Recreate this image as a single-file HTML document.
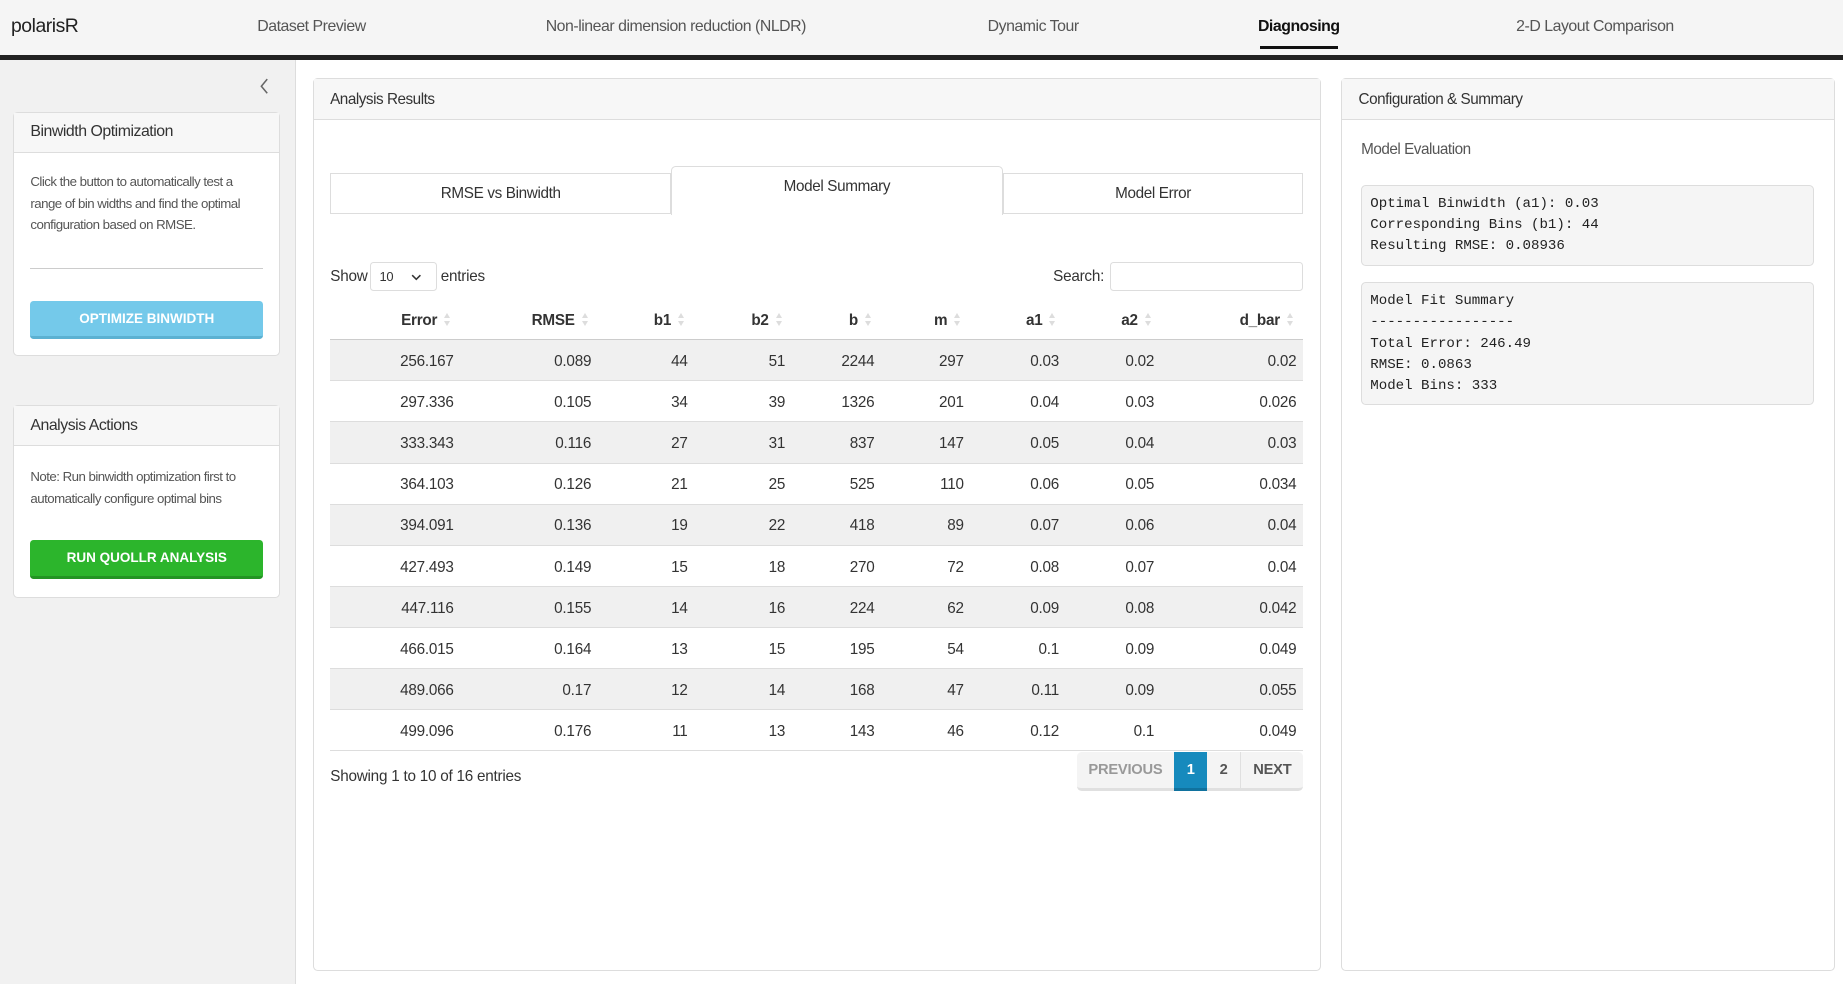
<!DOCTYPE html>
<html><head><meta charset="utf-8"><style>
*{box-sizing:border-box;margin:0;padding:0}
html,body{width:1843px;height:984px;overflow:hidden;background:#fff}
#root{zoom:1.17538;width:1568px;height:837px;position:relative;font-family:"Liberation Sans",sans-serif;color:#333;letter-spacing:-0.2px}
.abs{position:absolute}
.nav{left:0;top:0;width:1568px;height:47px;background:#f5f5f5}
.navbar-line{left:0;top:47px;width:1568px;height:4px;background:#222}
.nav span{position:absolute;top:15px;font-size:13.5px;color:#555;transform:translateX(-50%);white-space:nowrap;letter-spacing:-0.4px}
.side{left:0;top:51px;width:252px;height:786px;background:#f1f1f1;border-right:1px solid #ddd}
.card{position:absolute;background:#fff;border:1px solid #ddd;border-radius:4px}
.card .hd{height:34px;background:#f7f7f7;border-bottom:1px solid #ddd;padding:9px 14px;font-size:13.5px;color:#333;letter-spacing:-0.4px}
.txt{font-size:11.3px;color:#555;line-height:18px;letter-spacing:-0.45px}
.btn{position:absolute;left:14px;width:198px;height:33px;border-radius:3px;color:#fff;font-weight:bold;font-size:11.5px;text-align:center;line-height:31px;letter-spacing:0}
.panel{position:absolute;background:#fff;border:1px solid #ddd;border-radius:4px}
.panel .hd{height:35px;background:#f7f7f7;border-bottom:1px solid #ddd;padding:11px 14px;font-size:13px;color:#333;letter-spacing:-0.4px}
.tab{position:absolute;border:1px solid #ddd;background:#fff;font-size:13px;text-align:center;color:#333;letter-spacing:-0.3px}
table{position:absolute;left:281px;top:255px;width:828px;border-collapse:collapse;font-size:13px}
th{height:34px;text-align:right;font-weight:bold;padding-right:20px;padding-top:2px;position:relative;border-bottom:1px solid #ccc}
th::after{content:"";position:absolute;right:9px;top:11px;width:0;height:0;border-left:3px solid transparent;border-right:3px solid transparent;border-bottom:5px solid #ddd}
th::before{content:"";position:absolute;right:9px;top:18px;width:0;height:0;border-left:3px solid transparent;border-right:3px solid transparent;border-top:5px solid #ddd}
td{height:35px;text-align:right;padding-right:6px;padding-top:2px;border-top:1px solid #ddd;color:#333}
tr.o td{background:#f0f0f0}
tbody tr:last-child td{border-bottom:1px solid #ddd}
pre{position:absolute;left:1158px;width:385px;background:#f5f5f5;border:1px solid #ddd;border-radius:4px;font-family:"Liberation Mono",monospace;font-size:12px;line-height:18px;padding:7px 7px;color:#222;letter-spacing:0}
.pg{position:absolute;top:640px;height:33px;font-size:12.5px;font-weight:bold;text-align:center;line-height:31px;background:#f4f4f4;border-bottom:3px solid #e0e0e0}
</style></head><body><div id="root">
<div class="abs nav">
<span style="left:38px;font-size:16.5px;color:#222;top:13px">polarisR</span>
<span style="left:265px">Dataset Preview</span>
<span style="left:575px">Non-linear dimension reduction (NLDR)</span>
<span style="left:879px">Dynamic Tour</span>
<span style="left:1105px;color:#111;font-weight:bold">Diagnosing</span>
<span style="left:1357px">2-D Layout Comparison</span>
<div class="abs" style="left:1072px;top:39px;width:66px;height:3px;background:#111"></div>
</div>
<div class="abs navbar-line"></div>
<div class="abs side">
<svg class="abs" style="left:220px;top:15px" width="10" height="14"><path d="M7 1 L2 7 L7 13" stroke="#666" stroke-width="1.3" fill="none"/></svg>
<div class="card" style="left:11px;top:44px;width:227px;height:208px">
<div class="hd">Binwidth Optimization</div>
<div class="txt" style="padding:16px 14px 0">Click the button to automatically test a range of bin widths and find the optimal configuration based on RMSE.</div>
<div class="abs" style="left:14px;top:132px;width:198px;height:1px;background:#ccc"></div>
<div class="btn" style="top:160px;background:#74c9ea;border-bottom:3px solid #5bb1d2">OPTIMIZE BINWIDTH</div>
</div>
<div class="card" style="left:11px;top:294px;width:227px;height:164px">
<div class="hd">Analysis Actions</div>
<div class="txt" style="padding:17px 14px 0">Note: Run binwidth optimization first to automatically configure optimal bins</div>
<div class="btn" style="top:114px;background:#2cb52c;border-bottom:3px solid #239423">RUN QUOLLR ANALYSIS</div>
</div>
</div>
<div class="panel" style="left:266px;top:66px;width:858px;height:760px"><div class="hd">Analysis Results</div></div>
<div class="tab" style="left:281px;top:147px;width:290px;height:35px;line-height:34px">RMSE vs Binwidth</div>
<div class="tab" style="left:571px;top:141px;width:282px;height:42px;line-height:34px;border-bottom:none;border-radius:4px 4px 0 0">Model Summary</div>
<div class="tab" style="left:853px;top:147px;width:256px;height:35px;line-height:34px">Model Error</div>
<div class="abs" style="left:281px;top:228px;font-size:13px">Show</div>
<div class="abs" style="left:315px;top:223px;width:57px;height:25px;border:1px solid #ddd;border-radius:3px;font-size:11px;padding:5px 7px">10<svg class="abs" style="left:34px;top:9px" width="9" height="6"><path d="M1 1 L4.5 4.5 L8 1" stroke="#333" stroke-width="1.3" fill="none"/></svg></div>
<div class="abs" style="left:375px;top:228px;font-size:13px">entries</div>
<div class="abs" style="left:896px;top:228px;font-size:13px">Search:</div>
<div class="abs" style="left:944px;top:223px;width:165px;height:25px;border:1px solid #ddd;border-radius:3px"></div>
<table>
<thead><tr><th style="width:111px">Error</th><th style="width:117px">RMSE</th><th style="width:82px">b1</th><th style="width:83px">b2</th><th style="width:76px">b</th><th style="width:76px">m</th><th style="width:81px">a1</th><th style="width:81px">a2</th><th>d_bar</th></tr></thead>
<tbody>
<tr class="o"><td>256.167</td><td>0.089</td><td>44</td><td>51</td><td>2244</td><td>297</td><td>0.03</td><td>0.02</td><td>0.02</td></tr>
<tr><td>297.336</td><td>0.105</td><td>34</td><td>39</td><td>1326</td><td>201</td><td>0.04</td><td>0.03</td><td>0.026</td></tr>
<tr class="o"><td>333.343</td><td>0.116</td><td>27</td><td>31</td><td>837</td><td>147</td><td>0.05</td><td>0.04</td><td>0.03</td></tr>
<tr><td>364.103</td><td>0.126</td><td>21</td><td>25</td><td>525</td><td>110</td><td>0.06</td><td>0.05</td><td>0.034</td></tr>
<tr class="o"><td>394.091</td><td>0.136</td><td>19</td><td>22</td><td>418</td><td>89</td><td>0.07</td><td>0.06</td><td>0.04</td></tr>
<tr><td>427.493</td><td>0.149</td><td>15</td><td>18</td><td>270</td><td>72</td><td>0.08</td><td>0.07</td><td>0.04</td></tr>
<tr class="o"><td>447.116</td><td>0.155</td><td>14</td><td>16</td><td>224</td><td>62</td><td>0.09</td><td>0.08</td><td>0.042</td></tr>
<tr><td>466.015</td><td>0.164</td><td>13</td><td>15</td><td>195</td><td>54</td><td>0.1</td><td>0.09</td><td>0.049</td></tr>
<tr class="o"><td>489.066</td><td>0.17</td><td>12</td><td>14</td><td>168</td><td>47</td><td>0.11</td><td>0.09</td><td>0.055</td></tr>
<tr><td>499.096</td><td>0.176</td><td>11</td><td>13</td><td>143</td><td>46</td><td>0.12</td><td>0.1</td><td>0.049</td></tr>
</tbody></table>
<div class="abs" style="left:281px;top:653px;font-size:13px">Showing 1 to 10 of 16 entries</div>
<div class="pg" style="left:916px;width:83px;color:#999;border-radius:4px 0 0 4px">PREVIOUS</div>
<div class="pg" style="left:999px;width:28px;color:#fff;background:#168abd;border-bottom-color:#10729e">1</div>
<div class="pg" style="left:1027px;width:29px;color:#555;border-right:1px solid #e0e0e0">2</div>
<div class="pg" style="left:1056px;width:53px;color:#555;border-radius:0 4px 4px 0">NEXT</div>
<div class="panel" style="left:1141px;top:66px;width:420px;height:760px"><div class="hd">Configuration &amp; Summary</div></div>
<div class="abs" style="left:1158px;top:120px;font-size:13px;color:#555;letter-spacing:-0.4px">Model Evaluation</div>
<pre style="top:157px;height:69px">Optimal Binwidth (a1): 0.03
Corresponding Bins (b1): 44
Resulting RMSE: 0.08936</pre>
<pre style="top:240px;height:105px">Model Fit Summary
-----------------
Total Error: 246.49
RMSE: 0.0863
Model Bins: 333</pre>
</div></body></html>
